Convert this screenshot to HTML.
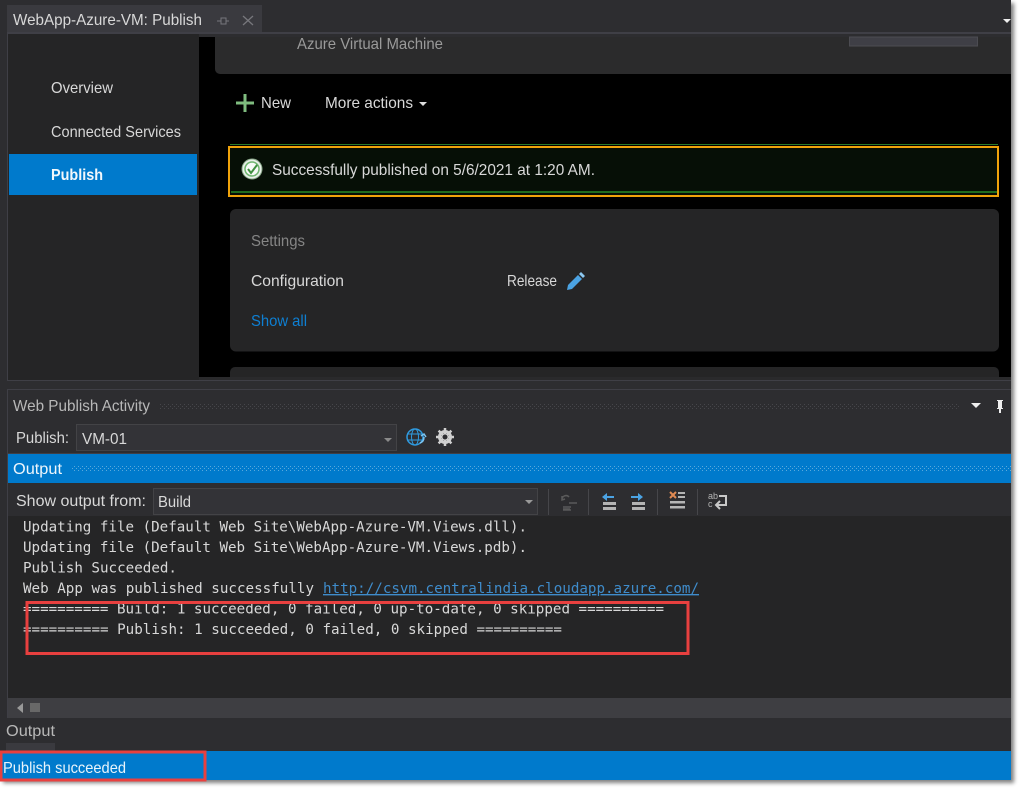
<!DOCTYPE html>
<html><head><meta charset="utf-8"><style>
html,body{margin:0;padding:0;background:#fff;width:1024px;height:793px;overflow:hidden}
#m{position:absolute;left:0;top:0;width:1011px;height:780px;box-shadow:3px 3px 4px #808080}
svg{position:absolute;left:0;top:0;display:block}
text{font-family:"Liberation Sans",sans-serif;font-size:16px;fill:#d8d8d8;white-space:pre}
.c{font-family:"DejaVu Sans Mono",monospace;font-size:13.800px;fill:#d8d8d8}
</style></head><body><div id="m"></div>
<svg width="1024" height="793" viewBox="0 0 1024 793">
<defs>
<pattern id="g" width="4" height="4" patternUnits="userSpaceOnUse"><rect width="1" height="1" fill="#46464a"/><rect x="2" y="2" width="1" height="1" fill="#46464a"/></pattern>
<pattern id="b" width="4" height="4" patternUnits="userSpaceOnUse"><rect width="1" height="1" fill="#5aa9dc"/><rect x="2" y="2" width="1" height="1" fill="#5aa9dc"/></pattern>
</defs>
<rect width="1011" height="780" fill="#2d2d30"/>
<!-- tab row -->
<rect x="7" y="5" width="255" height="28" fill="#3a3a3f"/>
<rect x="7" y="32" width="1004" height="2" fill="#3f3f46"/>
<text x="13" y="25" textLength="189" lengthAdjust="spacingAndGlyphs">WebApp-Azure-VM: Publish</text>
<path d="M217 21h4M221 18v6h5v-6zM226 21h3" stroke="#77777c" fill="none"/>
<path d="M243 16l10 9M253 16l-10 9" stroke="#77777c" stroke-width="1.300"/>
<path d="M1003 19h8l-4 4z" fill="#eee"/>
<!-- left nav -->
<rect x="7" y="34" width="1" height="346" fill="#3f3f46"/>
<rect x="8" y="34" width="191" height="346" fill="#252526"/>
<text x="51" y="93" textLength="62" lengthAdjust="spacingAndGlyphs">Overview</text>
<text x="51" y="137" textLength="130" lengthAdjust="spacingAndGlyphs">Connected Services</text>
<rect x="9" y="154" width="188" height="41" fill="#007acc"/>
<text x="51" y="180" textLength="52" lengthAdjust="spacingAndGlyphs" font-weight="700" style="fill:#f2f8fc">Publish</text>
<!-- main black -->
<rect x="199" y="37" width="812" height="340" fill="#000"/>
<rect x="199" y="377" width="812" height="3" fill="#2a2a2c"/>
<path d="M215 37H1011V74H220a5 5 0 0 1-5-5z" fill="#2b2b2c"/>
<text x="297" y="49" textLength="146" lengthAdjust="spacingAndGlyphs" style="fill:#9a9a9a">Azure Virtual Machine</text>
<rect x="849.500" y="37" width="128" height="9" fill="#3f3f46" stroke="#4c4c52"/>
<path d="M245 94v18M236 103h18" stroke="#7fbc7f" stroke-width="3"/>
<text x="261" y="108" textLength="30" lengthAdjust="spacingAndGlyphs">New</text>
<text x="325" y="108" textLength="88" lengthAdjust="spacingAndGlyphs">More actions</text>
<path d="M419 102h8l-4 4z" fill="#ddd"/>
<!-- banner -->
<rect x="230" y="144" width="768" height="1" fill="#2b7a2b"/>
<rect x="229" y="147" width="769" height="49" fill="#060f06" stroke="#f0a30a" stroke-width="2"/>
<rect x="231" y="191" width="766" height="2" fill="#1f6b1f"/>
<circle cx="252" cy="169" r="10" fill="#e8efe8" stroke="#8aa88a" stroke-width="1"/>
<circle cx="252" cy="169" r="7" fill="#f6faf6" stroke="#6fb56f" stroke-width="1.500"/>
<path d="M248 169l3 4 6-8" fill="none" stroke="#3f8f3f" stroke-width="2"/>
<text x="272" y="175" textLength="323" lengthAdjust="spacingAndGlyphs">Successfully published on 5/6/2021 at 1:20 AM.</text>
<!-- settings card -->
<rect x="230" y="209" width="769" height="142.500" rx="6" fill="#252526"/>
<text x="251" y="246" textLength="54" lengthAdjust="spacingAndGlyphs" style="fill:#858585">Settings</text>
<text x="251" y="286" textLength="93" lengthAdjust="spacingAndGlyphs">Configuration</text>
<text x="507" y="286" textLength="50" lengthAdjust="spacingAndGlyphs">Release</text>
<path d="M568 285l10-10 4 4-10 10-5 1z" fill="#4ba3e3"/>
<path d="M579 274l2-2 4 4-2 2z" fill="#8cc8f0"/>
<text x="251" y="326" textLength="56" lengthAdjust="spacingAndGlyphs" style="fill:#0e7fd2">Show all</text>
<path d="M230 377v-5a5 5 0 0 1 5-5H994a5 5 0 0 1 5 5v5z" fill="#252526"/>
<!-- separators -->
<rect x="7" y="380" width="1004" height="1" fill="#3f3f46"/>
<rect x="7" y="389" width="1004" height="1" fill="#3f3f46"/>
<rect x="7" y="390" width="1" height="328" fill="#3f3f46"/>
<!-- web publish activity -->
<text x="13" y="411" textLength="137" lengthAdjust="spacingAndGlyphs" style="fill:#b8b8b8">Web Publish Activity</text>
<rect x="160" y="403" width="800" height="7" fill="url(#g)"/>
<path d="M971 403h10l-5 5z" fill="#eee"/>
<path d="M997 400h6v1h-1v7h1v1h-2v4h-2v-4h-2v-1h1v-7h-1z" fill="#eee"/>
<text x="16" y="443" textLength="53" lengthAdjust="spacingAndGlyphs">Publish:</text>
<rect x="76.500" y="424.500" width="320" height="26" fill="#333337" stroke="#434346"/>
<text x="82" y="444" textLength="45" lengthAdjust="spacingAndGlyphs">VM-01</text>
<path d="M384 438h8l-4 4z" fill="#8a8a8a"/>
<circle cx="415" cy="437" r="8" fill="none" stroke="#2f9be0" stroke-width="1.500"/>
<ellipse cx="415" cy="437" rx="3.500" ry="8" fill="none" stroke="#2f9be0"/>
<path d="M407 434h16M407 440h16" stroke="#2f9be0"/>
<path d="M420 443c3-1 4-3 4-6M421 436l3-2 2 3" fill="none" stroke="#7cc4f0" stroke-width="1.500"/>
<circle cx="445" cy="437" r="5.500" fill="none" stroke="#d0d0d0" stroke-width="3"/>
<path d="M445 428v18M436 437h18M438.600 430.600l12.800 12.800M451.400 430.600l-12.800 12.800" stroke="#d0d0d0" stroke-width="2.500"/>
<circle cx="445" cy="437" r="2.500" fill="#2d2d30"/>
<!-- output title -->
<rect x="7" y="453" width="1004" height="1" fill="#3f3f46"/>
<rect x="8" y="454" width="1003" height="29" fill="#007acc"/>
<text x="13" y="474" textLength="49" lengthAdjust="spacingAndGlyphs" style="fill:#eef6fc">Output</text>
<rect x="72" y="465" width="939" height="7" fill="url(#b)"/>
<!-- output toolbar -->
<text x="16" y="506" textLength="130" lengthAdjust="spacingAndGlyphs">Show output from:</text>
<rect x="153.500" y="488.500" width="384" height="26" fill="#333337" stroke="#434346"/>
<text x="158" y="507" textLength="33" lengthAdjust="spacingAndGlyphs">Build</text>
<path d="M525 500h8l-4 4z" fill="#999"/>
<path d="M548.500 489v26M588.500 489v26M657.500 489v26M697.500 489v26" stroke="#46464a"/>
<g fill="none" stroke="#5a5a5a"><path d="M562 500a4 4 0 0 1 7-3M565 499l-3 1 0-4M569 503h8M563 507h8M563 510h8M563 509h7" stroke-width="1.500"/></g>
<g fill="#b4b4b4"><rect x="603" y="502" width="13" height="3"/><rect x="603" y="507" width="13" height="3"/><rect x="632" y="502" width="13" height="3"/><rect x="632" y="507" width="13" height="3"/></g>
<path d="M602 497l5-4v3h7v2h-7v3z" fill="#4ba3e3"/>
<path d="M643 497l-5-4v3h-7v2h7v3z" fill="#4ba3e3"/>
<path d="M670 492l6 6M676 492l-6 6" stroke="#e08a52" stroke-width="2"/>
<g fill="#b4b4b4"><rect x="678" y="492" width="7" height="2"/><rect x="678" y="496" width="7" height="2"/><rect x="670" y="501" width="15" height="2.500"/><rect x="670" y="506" width="15" height="2.500"/></g>
<text x="708" y="499" style="font-size:9px;fill:#b4b4b4" textLength="10">ab</text>
<text x="708" y="507" style="font-size:9px;fill:#b4b4b4">c</text>
<path d="M719 496h7v9h-9M720 501l-4 4 4 4" fill="none" stroke="#c8c8c8" stroke-width="2"/>
<!-- output area -->
<rect x="8" y="516" width="1003" height="182" fill="#252526"/>
<text class="c" x="23" y="531.500" textLength="504" lengthAdjust="spacingAndGlyphs">Updating file (Default Web Site\WebApp-Azure-VM.Views.dll).</text>
<text class="c" x="23" y="552" textLength="504" lengthAdjust="spacingAndGlyphs">Updating file (Default Web Site\WebApp-Azure-VM.Views.pdb).</text>
<text class="c" x="23" y="572.500" textLength="154" lengthAdjust="spacingAndGlyphs">Publish Succeeded.</text>
<text class="c" x="23" y="593" textLength="291" lengthAdjust="spacingAndGlyphs">Web App was published successfully</text>
<text class="c" x="323" y="593" textLength="376" lengthAdjust="spacingAndGlyphs" style="fill:#3f8ccb" text-decoration="underline">http://csvm.centralindia.cloudapp.azure.com/</text>
<text class="c" x="23" y="613.500" textLength="641" lengthAdjust="spacingAndGlyphs">========== Build: 1 succeeded, 0 failed, 0 up-to-date, 0 skipped ==========</text>
<text class="c" x="23" y="634" textLength="539" lengthAdjust="spacingAndGlyphs">========== Publish: 1 succeeded, 0 failed, 0 skipped ==========</text>
<!-- scrollbar -->
<rect x="8" y="698" width="1003" height="20" fill="#3e3e42"/>
<path d="M23 703v10l-6-5z" fill="#999"/>
<rect x="30" y="703" width="10" height="9" fill="#686868"/>
<!-- bottom tabs -->
<text x="6" y="736" textLength="49" lengthAdjust="spacingAndGlyphs" style="fill:#b8b8b8">Output</text>
<rect x="6" y="743" width="49" height="8" fill="#3a3a3f"/>
<!-- status bar -->
<rect y="751" width="1011" height="29" fill="#007acc"/>
<text x="3" y="773" textLength="123" lengthAdjust="spacingAndGlyphs" style="fill:#e8f4fb">Publish succeeded</text>
<!-- red boxes -->
<rect x="27" y="602.500" width="661" height="51" fill="none" stroke="#e8403f" stroke-width="3"/>
<rect x="1" y="752" width="204" height="28" fill="none" stroke="#e8403f" stroke-width="3"/>
</svg>
</body></html>
